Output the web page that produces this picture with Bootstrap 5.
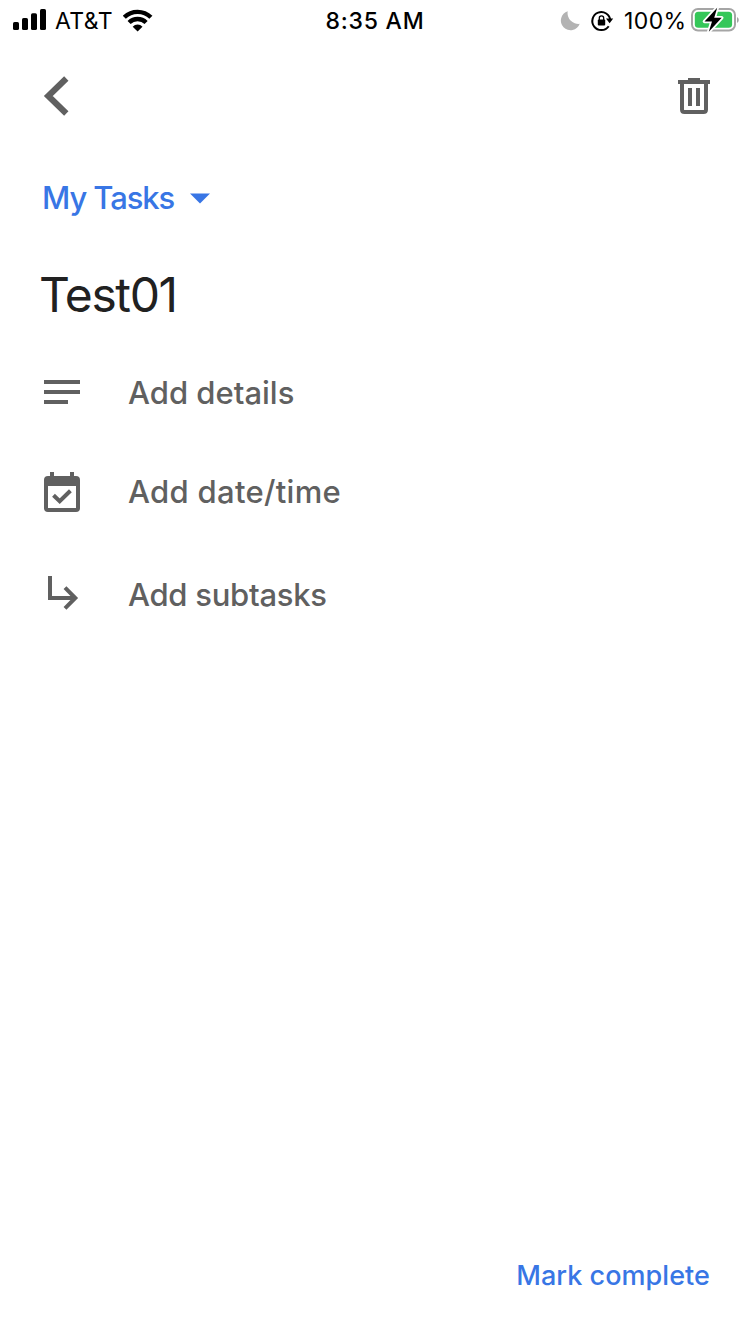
<!DOCTYPE html>
<html lang="en">
<head>
<meta charset="utf-8">
<meta name="viewport" content="width=device-width, initial-scale=1">
<title>Test01</title>
<link href="https://cdn.jsdelivr.net/npm/bootstrap@5.3.0/dist/css/bootstrap.min.css" rel="stylesheet">
<style>
body{font-family:Inter,"Liberation Sans",sans-serif;color:#202124;background:#fff}
.screen{height:1334px;overflow:hidden}
svg{display:block;flex:none}
.status-bar{height:40px;color:#000;font-size:23px;line-height:40px;padding:1px 11px 0 13px}
.side{flex:1 1 0}
.clock{font-size:23px;font-weight:500;letter-spacing:.75px;margin-left:-2px}
.carrier{width:59px;margin-left:9px;margin-right:9px;letter-spacing:.4px}
.percent{width:63px;letter-spacing:.4px}
.app-bar{height:112px;padding:0 38px 0 42px}
.plain{background:none;border:0;padding:0;color:inherit;text-align:left;font-weight:inherit}
.ink{color:#606060}
.blue{color:#3876e5}
.list-picker{height:92px;padding-left:42px;font-size:31px;font-weight:500;letter-spacing:-1.1px}
.list-picker svg{margin-left:16px}
.task-title{height:102px;padding-left:39px;font-size:48px;font-weight:400;margin:0;letter-spacing:-1.4px;color:#212121}
.task-row{padding-left:42px;font-size:31px;font-weight:500}
.task-row svg{margin-right:46px}
.h-details{height:92px}.h-date{height:108px;letter-spacing:.3px}.h-sub{height:98px;letter-spacing:-.27px}
.h-details span{padding-top:2px}
.bottom-bar{height:116px;padding-right:40px;font-size:27px;font-weight:500}
.bottom-bar .plain{letter-spacing:.05px}
</style>
</head>
<body>
<div class="screen d-flex flex-column">
  <div class="status-bar d-flex align-items-center text-nowrap">
    <div class="side d-flex align-items-center">
      <svg width="33" height="40" viewBox="13 1 33 40"><rect x="13" y="22" width="6" height="8" rx="1.6"/><rect x="22" y="18" width="6" height="12" rx="1.6"/><rect x="31" y="13.3" width="6" height="16.7" rx="1.6"/><rect x="40" y="9" width="6" height="21" rx="1.6"/></svg>
      <span class="carrier">AT&amp;T</span>
      <svg width="30" height="40" viewBox="123 1 30 40"><g fill="none" stroke="#000" stroke-width="4.4"><path d="M124.3 17.3a19 19 0 0 1 26.600 0"/><path d="M129.100 22.500a12.200 12.200 0 0 1 17 0"/></g><path d="M132.700 26.700a6.800 6.800 0 0 1 9.800 0l-4.900 4.700z"/></svg>
    </div>
    <span class="clock">8:35 AM</span>
    <div class="side d-flex align-items-center justify-content-end">
      <svg width="20" height="40" viewBox="560 1 20 40"><path d="M567.700 11.300a10.800 10.800 0 0 0 12 12.500 9.700 9.700 0 1 1-12-12.500z" fill="#b3b3b3"/></svg>
      <svg class="ms-2 me-1" width="32" height="40" viewBox="588 1 32 40"><path d="M608.700 26.200a9 9 0 1 1 1.600-5.700" fill="none" stroke="#000" stroke-width="2"/><path d="M606 18.500h7.200l-3.600 4.700z"/><rect x="597.800" y="19.500" width="7.400" height="6" rx="1"/><path d="M599.300 20v-2a2.200 2.200 0 0 1 4.400 0v2" fill="none" stroke="#000" stroke-width="1.300"/></svg>
      <span class="percent">100%</span>
      <svg class="ms-1" width="48" height="40" viewBox="691 1 48 40"><rect x="692" y="9" width="43" height="21.500" rx="6" fill="none" stroke="#a5a5a5" stroke-width="2"/><path d="M737 17v6q1.800-.8 1.800-3t-1.800-3z" fill="#a5a5a5"/><rect x="694.800" y="11.700" width="37.300" height="16" rx="3.500" fill="#35c759"/><path d="M717.200 7.800l-12.700 13.700h7.500l-3.200 10.200 12.900-13.900h-7.500z" fill="#000" stroke="#fff" stroke-width="3.600" paint-order="stroke" stroke-linejoin="round"/></svg>
    </div>
  </div>
  <header class="app-bar d-flex align-items-center justify-content-between ink">
    <button class="plain" aria-label="Back"><svg width="30" height="44" viewBox="42 74 30 44"><path d="M66.300 78.500L48.300 96l18 17.500" fill="none" stroke="currentColor" stroke-width="6.200"/></svg></button>
    <button class="plain" aria-label="Delete"><svg width="36" height="40" viewBox="676 76 36 40"><path d="M678 80h10v-2h12v2h10v4h-32z" fill="currentColor"/><path d="M682 82v27.500q0 2.500 2.500 2.500h19q2.500 0 2.500-2.500V82M690 88v18M698 88v18" fill="none" stroke="currentColor" stroke-width="4"/></svg></button>
  </header>
  <button class="plain list-picker blue d-flex align-items-center"><span>My Tasks</span><svg width="20" height="12" viewBox="0 0 20 12"><path d="M0 1.500h20L10 11.500z" fill="currentColor"/></svg></button>
  <h1 class="task-title d-flex align-items-center">Test01</h1>
  <button class="plain task-row h-details ink d-flex align-items-center"><svg width="40" height="40" viewBox="42 372 40 40"><path d="M44 380h36v4H44zM44 390h36v4H44zM44 400h24v4H44z" fill="currentColor"/></svg><span>Add details</span></button>
  <button class="plain task-row h-date ink d-flex align-items-center"><svg width="40" height="44" viewBox="42 470 40 44"><path fill-rule="evenodd" d="M50 472h4v4h16v-4h4v4h2q4 0 4 4v28q0 4-4 4H48q-4 0-4-4v-28q0-4 4-4h2zM48 486v22h28v-22z" fill="currentColor"/><path d="M53.500 495.300l6.200 6 10.700-10.500" fill="none" stroke="currentColor" stroke-width="4"/></svg><span>Add date/time</span></button>
  <button class="plain task-row h-sub ink d-flex align-items-center"><svg width="40" height="44" viewBox="42 573 40 44"><path d="M50 576v22h25M65 587.700L75.300 598 65 608.300" fill="none" stroke="currentColor" stroke-width="4"/></svg><span>Add subtasks</span></button>
  <footer class="bottom-bar mt-auto d-flex align-items-center justify-content-end blue"><button class="plain">Mark complete</button></footer>
</div>
<script src="https://cdn.jsdelivr.net/npm/bootstrap@5.3.0/dist/js/bootstrap.bundle.min.js"></script>
</body>
</html>
